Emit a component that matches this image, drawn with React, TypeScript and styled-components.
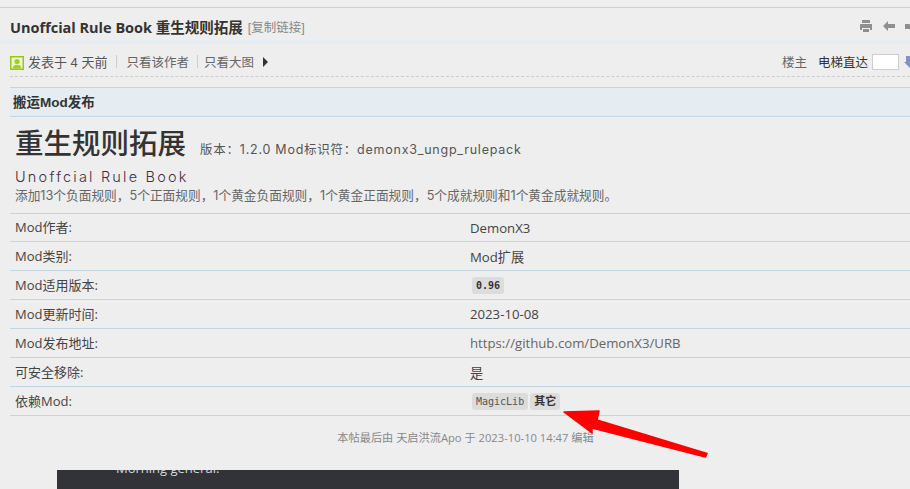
import React from 'react'
import styled, { createGlobalStyle } from 'styled-components'

const cjk = `"Liberation Sans", "Noto Sans CJK SC", sans-serif`
const ui = `"Open Sans", "Noto Sans CJK SC", sans-serif`
const tech = `"Inter", "Noto Sans CJK SC", sans-serif`

const GlobalStyle = createGlobalStyle`
  html, body {
    margin: 0;
    padding: 0;
    width: 910px;
    height: 489px;
    overflow: hidden;
    background: #eeeeee;
  }
`

const rows = [
  { label: 'Mod作者:', value: 'DemonX3' },
  { label: 'Mod类别:', value: 'Mod扩展' },
  { label: 'Mod适用版本:', tags: [{ text: '0.96', bold: true }] },
  { label: 'Mod更新时间:', value: '2023-10-08' },
  { label: 'Mod发布地址:', value: 'https://github.com/DemonX3/URB', muted: true },
  { label: '可安全移除:', value: '是' },
  { label: '依赖Mod:', tags: [{ text: 'MagicLib' }, { text: '其它', bold: true, cjk: true }] },
]

export default function App() {
  return (
    <Page>
      <GlobalStyle />
      <TitleBar>
        <Title>Unoffcial Rule Book 重生规则拓展</Title>
        <CopyLink>[复制链接]</CopyLink>
        <TitleIcons>
          <svg width="14" height="14" viewBox="0 0 14 14" fill="#8f8f8f">
            <path d="M3 1h8v3H3zM1 5h12v6h-2V9H3v2H1zM4 10h6v3H4z" />
          </svg>
          <svg width="12" height="12" viewBox="0 0 12 12" fill="#8f8f8f">
            <path d="M0 6l5-5v3h7v4H5v3z" />
          </svg>
          <RightStub />
        </TitleIcons>
      </TitleBar>
      <Band />
      <AuthorBar>
        <Avatar>
          <svg width="14" height="14" viewBox="0 0 14 14">
            <rect width="14" height="14" fill="#94c818" />
            <rect x="1.5" y="1.5" width="11" height="11" fill="#f1f7d8" />
            <circle cx="7" cy="5.5" r="2.6" fill="#9fd020" />
            <path d="M2.5 12.5c.4-2.8 2-3.8 4.5-3.8s4.100 1 4.500 3.800z" fill="#9fd020" />
          </svg>
        </Avatar>
        <PostTime>发表于 4 天前</PostTime>
        <Pipe />
        <AuthorLink>只看该作者</AuthorLink>
        <Pipe $tight />
        <AuthorLink>只看大图</AuthorLink>
        <PlayMark />
        <FloorInfo>
          <FloorLabel>楼主</FloorLabel>
          <Jump>电梯直达</Jump>
          <JumpInput />
          <svg width="6" height="12" viewBox="0 0 6 12" fill="#7d93c8">
            <path d="M2 0h4v12L0 6h2z" />
          </svg>
        </FloorInfo>
      </AuthorBar>
      <Content>
        <SectionHead>搬运Mod发布</SectionHead>
        <ModHead>
          <ModName>重生规则拓展</ModName>
          <ModMeta>版本：1.2.0 Mod标识符：demonx3_ungp_rulepack</ModMeta>
        </ModHead>
        <EnglishName>Unoffcial Rule Book</EnglishName>
        <Summary>添加13个负面规则，5个正面规则，1个黄金负面规则，1个黄金正面规则，5个成就规则和1个黄金成就规则。</Summary>
        <InfoTable>
          {rows.map((row) => (
            <InfoRow key={row.label}>
              <RowLabel>{row.label}</RowLabel>
              <RowValue $muted={row.muted}>
                {row.value}
                {row.tags?.map((tag) => (
                  <Tag key={tag.text} $bold={tag.bold} $cjk={tag.cjk}>{tag.text}</Tag>
                ))}
              </RowValue>
            </InfoRow>
          ))}
        </InfoTable>
        <EditNote>本帖最后由 天启洪流Apo 于 2023-10-10 14:47 编辑</EditNote>
      </Content>
      <DarkPanel>
        <PanelText>Morning general:</PanelText>
      </DarkPanel>
      <Arrow width="150" height="54" viewBox="0 0 150 54">
        <path d="M1 4L36 3L34 12L144 45.500L142.500 49L29 20L29 25z" fill="#ff0000" stroke="#ff0000" strokeWidth="1.500" strokeLinejoin="round" />
      </Arrow>
    </Page>
  )
}

const Page = styled.div`
  position: relative;
  width: 910px;
  height: 489px;
  overflow: hidden;
  padding-top: 7px;
  box-sizing: border-box;
  background: #eeeeee;
  font-family: ${cjk};
`

const TitleBar = styled.div`
  display: flex;
  align-items: center;
  height: 33px;
  padding: 4px 0 0 10px;
  box-sizing: border-box;
  border-top: 1px solid #cdcdcd;
`

const Title = styled.h1`
  margin: 0;
  font: 700 14.500px ${ui};
  color: #333333;
`

const CopyLink = styled.span`
  margin-left: 5px;
  font-size: 12.500px;
  color: #888888;
`

const TitleIcons = styled.div`
  margin-left: auto;
  display: flex;
  align-items: center;
  gap: 10px;
`

const RightStub = styled.span`
  width: 5px;
  height: 5px;
  background: #8f8f8f;
`

const Band = styled.div`
  height: 4px;
  background: #e5edf2;
`

const AuthorBar = styled.div`
  display: flex;
  align-items: center;
  height: 33px;
  margin-left: 10px;
  padding-top: 3px;
  border-bottom: 1px dashed #cdcdcd;
  box-sizing: border-box;
  font-size: 12.500px;
`

const Avatar = styled.span`
  display: flex;
  margin-right: 4px;
  margin-top: 3px;
`

const PostTime = styled.span`
  font-size: 13px;
  color: #555555;
`

const Pipe = styled.span<{ $tight?: boolean }>`
  width: 1px;
  height: 13px;
  margin: 0 ${(p) => (p.$tight ? '6px' : '9px')} 0 ${(p) => (p.$tight ? '8px' : '9px')};
  background: #cdcdcd;
`

const AuthorLink = styled.span`
  color: #666666;
`

const PlayMark = styled.span`
  width: 0;
  height: 0;
  margin-left: 9px;
  border-left: 5px solid #333333;
  border-top: 5px solid transparent;
  border-bottom: 5px solid transparent;
`

const FloorInfo = styled.div`
  margin-left: auto;
  display: flex;
  align-items: center;
`

const FloorLabel = styled.span`
  margin-right: 11px;
  color: #666666;
`

const Jump = styled.span`
  color: #333333;
`

const JumpInput = styled.span`
  width: 25px;
  height: 14px;
  margin: 0 5px 0 4px;
  background: #ffffff;
  border: 1px solid #cdcdcd;
`

const Content = styled.div`
  margin: 10px 0 0 10px;
`

const SectionHead = styled.div`
  height: 30px;
  padding-left: 3px;
  box-sizing: border-box;
  background: #e5edf2;
  border-top: 1px solid #c2d5e3;
  border-bottom: 1px solid #c2d5e3;
  font-size: 13.500px;
  font-weight: 700;
  line-height: 29px;
  color: #333333;
`

const ModHead = styled.div`
  display: flex;
  align-items: baseline;
  height: 37px;
  padding: 9px 0 0 5px;
`

const ModName = styled.h2`
  margin: 0;
  font: 500 28.500px/36px ${tech};
  color: #333333;
`

const ModMeta = styled.span`
  margin-left: 14px;
  font: 400 12.500px ${tech};
  letter-spacing: 0.76px;
  color: #555555;
`

const EnglishName = styled.div`
  padding: 4px 0 0 5px;
  font: 300 14.500px/20px ${tech};
  letter-spacing: 2.200px;
  color: #3f2f45;
`

const Summary = styled.div`
  padding-left: 5px;
  font: 400 12.700px/18px ${tech};
  color: #666666;
`

const InfoTable = styled.div`
  margin-top: 8px;
  border-top: 1px solid #c2d5e3;
`

const InfoRow = styled.div`
  display: grid;
  grid-template-columns: 455px 1fr;
  align-items: center;
  height: 29px;
  box-sizing: border-box;
  border-bottom: 1px solid #c2d5e3;
  font: 400 13px ${ui};
  color: #444444;

  &:first-child {
    height: 28px;
  }
`

const RowLabel = styled.span`
  padding: 0 0 2px 5px;
`

const RowValue = styled.span<{ $muted?: boolean }>`
  display: flex;
  gap: 2px;
  padding-left: 5px;
  font-size: 13.200px;
  color: ${(p) => (p.$muted ? '#666666' : '#444444')};
`

const Tag = styled.code<{ $bold?: boolean; $cjk?: boolean }>`
  margin-left: ${(p) => (p.$cjk ? '0' : '2px')};
  padding: 0 4px;
  height: 17px;
  border-radius: 3px;
  background: #dcdcdc;
  font: ${(p) => (p.$bold ? 700 : 400)} ${(p) => (p.$cjk ? '11px' : '10px')}/17px "DejaVu Sans Mono", "Noto Sans CJK SC", monospace;
  color: ${(p) => (p.$bold ? '#333333' : '#555555')};
`

const EditNote = styled.div`
  margin-top: 13px;
  padding-left: 11px;
  text-align: center;
  font: 400 11.200px/17px ${ui};
  color: #888888;
`

const DarkPanel = styled.div`
  position: absolute;
  top: 470px;
  left: 57px;
  width: 622px;
  height: 40px;
  overflow: hidden;
  background: #323338;
`

const PanelText = styled.div`
  margin: -11px 0 0 59px;
  font: 400 13px/18px ${ui};
  color: #d8d8d8;
`

const Arrow = styled.svg`
  position: absolute;
  left: 563px;
  top: 408px;
`
